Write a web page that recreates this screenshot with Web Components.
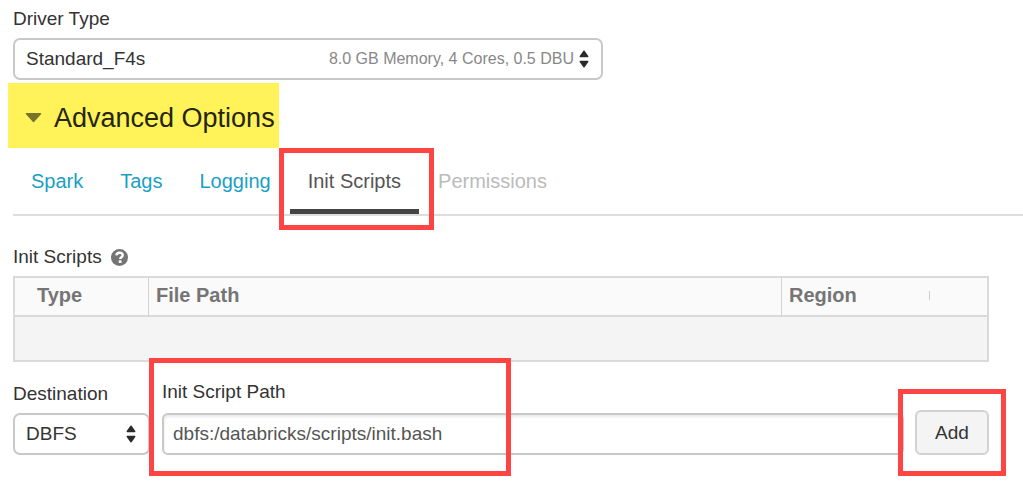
<!DOCTYPE html>
<html lang="en">
<head>
<meta charset="utf-8">
<meta name="viewport" content="width=device-width, initial-scale=1">
<title>Cluster configuration</title>
<style>
  body {
    margin: 0;
    background: #fff;
    color: #333;
    font: 19px/24px "Liberation Sans", Arial, sans-serif;
  }
</style>
</head>
<body>
<cluster-form></cluster-form>

<script>
const define = (name, html, setup) => {
  const template = document.createElement('template');
  template.innerHTML = `<style>*{box-sizing:border-box}:host{display:block;box-sizing:border-box}</style>${html}`;
  customElements.define(name, class extends HTMLElement {
    constructor() {
      super();
      this.attachShadow({ mode: 'open' }).append(template.content.cloneNode(true));
    }
    connectedCallback() { if (setup) setup(this, this.shadowRoot); }
  });
};

/* Red frame drawn over the content that it wraps */
define('call-out', `
  <style>
    :host { position: relative; }
    .frame {
      position: absolute;
      inset: var(--frame-inset);
      width: var(--frame-width, auto);
      border: 5px solid #ff4444;
      pointer-events: none;
      z-index: 1;
    }
  </style>
  <slot></slot><div class="frame"></div>`);

define('select-field', `
  <style>
    label { display: block; margin-bottom: 7px; }
    .box { position: relative; }
    select {
      display: block;
      width: 100%;
      height: 42px;
      margin: 0;
      padding: 0 32px 0 11px;
      appearance: none;
      border: 2px solid #c8c8c8;
      border-radius: 7px;
      background: #fff;
      color: #333;
      font: inherit;
    }
    .end {
      position: absolute;
      inset: 0 14px 0 auto;
      display: flex;
      align-items: center;
      gap: 5px;
      pointer-events: none;
      color: #888;
      font-size: 16px;
    }
    svg { display: block; fill: #2b2b2b; }
  </style>
  <label for="control"></label>
  <div class="box">
    <select id="control"><option></option></select>
    <div class="end">
      <slot></slot>
      <svg width="10" height="18" viewBox="0 0 10 18" aria-hidden="true">
        <path d="M4.4.8Q5 0 5.6.8L9.3 6Q9.8 7.2 8.7 7.2H1.3Q.2 7.2.7 6ZM4.4 17.2Q5 18 5.6 17.2L9.3 12Q9.8 10.8 8.7 10.8H1.3Q.2 10.8.7 12Z"/>
      </svg>
    </div>
  </div>`,
  (el, root) => {
    root.querySelector('label').textContent = el.getAttribute('label');
    root.querySelector('option').textContent = el.getAttribute('value');
  });

define('text-field', `
  <style>
    label { display: block; margin-bottom: 9px; }
    input {
      display: block;
      width: 100%;
      height: 42px;
      margin: 0;
      padding: 0 9px;
      border: 2px solid #c8c8c8;
      border-radius: 6px;
      background: #fff;
      box-shadow: inset 0 2px 3px rgba(0, 0, 0, .09);
      color: #555;
      font: inherit;
    }
  </style>
  <label for="control"></label>
  <input id="control" type="text" spellcheck="false">`,
  (el, root) => {
    root.querySelector('label').textContent = el.getAttribute('label');
    root.querySelector('input').value = el.getAttribute('value');
  });

define('action-button', `
  <style>
    button {
      display: block;
      width: 74px;
      height: 45px;
      margin: 0;
      padding: 0;
      border: 2px solid #d2d2d2;
      border-radius: 6px;
      background: #f4f4f4;
      color: #333;
      font: inherit;
    }
  </style>
  <button type="button"><slot></slot></button>`);

define('section-toggle', `
  <style>
    :host { width: fit-content; background: #fff359; }
    h2 { margin: 0; font: inherit; }
    button {
      display: flex;
      align-items: center;
      gap: 12px;
      height: 65px;
      margin: 0;
      padding: 4px 4px 0 17px;
      border: 0;
      background: none;
      color: #252511;
      font: inherit;
      font-size: 27px;
    }
    svg { display: block; fill: #77732d; }
  </style>
  <h2><button type="button" aria-expanded="true">
    <svg width="17" height="10" viewBox="0 0 17 10" aria-hidden="true"><path d="M1.6 0H15.4Q17 0 16 1.3L9.3 8.7Q8.5 9.6 7.7 8.7L1 1.3Q0 0 1.6 0Z"/></svg>
    <slot></slot>
  </button></h2>`);

define('tab-link', `
  <style>
    a {
      display: flex;
      align-items: center;
      height: 68px;
      padding: 0 18px;
      border-bottom: 2px solid transparent;
      color: #1b9fc4;
      font-size: 20px;
      text-decoration: none;
      white-space: nowrap;
    }
    :host([selected]) a {
      color: #555;
      background: linear-gradient(#444, #444) bottom / 100% 5px no-repeat;
    }
    :host([disabled]) a { color: #bbb; }
  </style>
  <a href="#"><slot></slot></a>`,
  (el, root) => {
    const link = root.querySelector('a');
    if (el.hasAttribute('selected')) link.setAttribute('aria-current', 'page');
    if (el.hasAttribute('disabled')) link.setAttribute('aria-disabled', 'true');
  });

define('tab-bar', `
  <style>
    nav {
      display: flex;
      gap: 1px;
      background: linear-gradient(#ddd, #ddd) bottom / 100% 2px no-repeat;
    }
  </style>
  <nav aria-label="Advanced options"><slot></slot></nav>`);

define('help-icon', `
  <style>svg { display: block; }</style>
  <svg width="17" height="17" viewBox="0 0 17 17" role="img" aria-label="Help">
    <circle cx="8.5" cy="8.5" r="8.5" fill="#757575"/>
    <path d="M5.4 6.4C5.6 4.3 7 3.7 8.5 3.7c1.8 0 3.2 1 3.2 2.6 0 2-2.5 2-2.5 3.8" fill="none" stroke="#fff" stroke-width="2.4"/>
    <rect x="7.8" y="11.3" width="2.7" height="2.6" fill="#fff"/>
  </svg>`);

define('scripts-table', `
  <style>
    table {
      width: 100%;
      table-layout: fixed;
      border-collapse: separate;
      border-spacing: 0;
      border: 2px solid #dadada;
      background: #f4f4f4;
      color: #757575;
      font-size: 20px;
    }
    th {
      height: 39px;
      padding: 0 7px 3px;
      border-bottom: 2px solid #dadada;
      background: #fafafa;
      text-align: left;
    }
    th + th { border-left: 1px solid #d4d4d4; }
    .type { width: 133px; padding-left: 22px; }
    .region { width: 206px; }
    .region div { display: flex; align-items: center; justify-content: space-between; padding-right: 50px; }
    .grip { width: 1px; height: 9px; background: #ccc; }
    td { height: 43px; padding: 0; }
  </style>
  <table aria-label="Init Scripts">
    <thead><tr>
      <th class="type" scope="col">Type</th>
      <th scope="col">File Path</th>
      <th class="region" scope="col"><div>Region<span class="grip"></span></div></th>
    </tr></thead>
    <tbody><tr><td colspan="3"></td></tr></tbody>
  </table>`);

define('cluster-form', `
  <style>
    form { padding: 7px 0 28px 13px; }
    .driver { max-width: 590px; margin-bottom: 3px; }
    section-toggle { margin-left: -5px; }
    .title { display: flex; align-items: center; gap: 9px; margin: 29px 0 7px; }
    .content { margin-right: 34px; }
    .row { display: flex; align-items: flex-end; margin-top: 18px; }
    .destination { flex: none; width: 137px; margin-right: 12px; }
    .path { flex: 1; margin-right: 11px; --frame-inset: -22px auto -21px -13px; --frame-width: 362px; }
    .add { flex: none; --frame-inset: -21px -17px; }
    .current { --frame-inset: 0 -15px -14px -11px; }
  </style>
  <form>
    <select-field class="driver" label="Driver Type" value="Standard_F4s">8.0 GB Memory, 4 Cores, 0.5 DBU</select-field>
    <section-toggle>Advanced Options</section-toggle>
    <tab-bar>
      <tab-link>Spark</tab-link>
      <tab-link>Tags</tab-link>
      <tab-link>Logging</tab-link>
      <call-out class="current"><tab-link selected>Init Scripts</tab-link></call-out>
      <tab-link disabled>Permissions</tab-link>
    </tab-bar>
    <div class="content">
      <div class="title">Init Scripts <help-icon></help-icon></div>
      <scripts-table></scripts-table>
      <div class="row">
        <select-field class="destination" label="Destination" value="DBFS"></select-field>
        <call-out class="path"><text-field label="Init Script Path" value="dbfs:/databricks/scripts/init.bash"></text-field></call-out>
        <call-out class="add"><action-button>Add</action-button></call-out>
      </div>
    </div>
  </form>`);
</script>
</body>
</html>
